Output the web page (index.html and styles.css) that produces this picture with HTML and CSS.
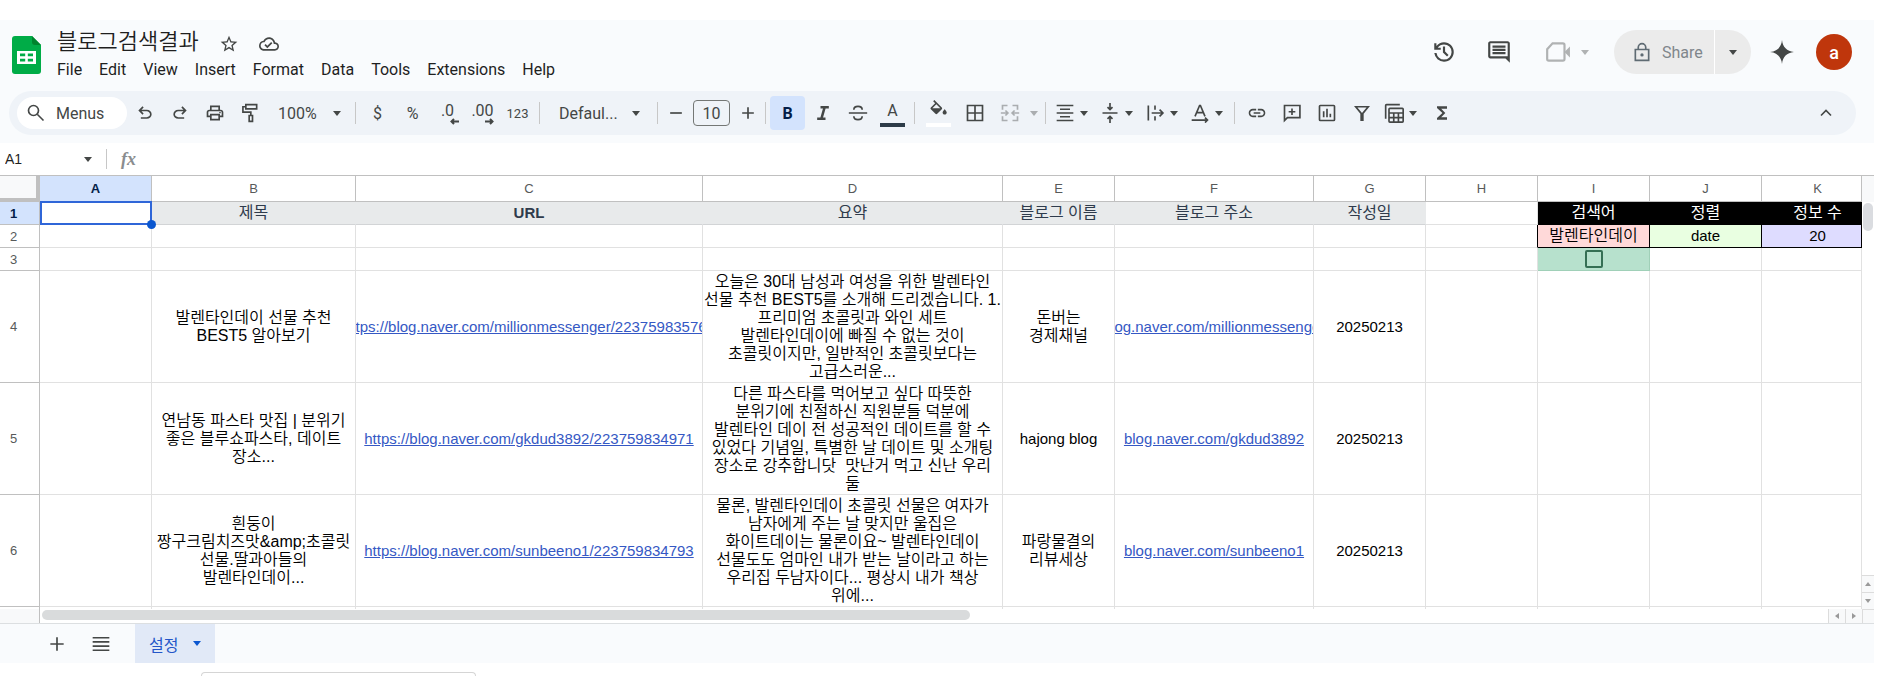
FILE: index.html
```
<!DOCTYPE html>
<html lang="ko">
<head>
  <meta charset="UTF-8" />
  <meta name="viewport" content="width=device-width, initial-scale=1.0"/>
  <title>블로그검색결과</title>
  <link rel="stylesheet" href="styles.css">
</head>
<body>
  <!-- Title bar -->
  <header class="header">
    <svg class="logo" viewBox="0 0 29 38">
      <path fill="#00ac47" d="M3 0h17l9 9v26a3 3 0 0 1-3 3H3a3 3 0 0 1-3-3V3a3 3 0 0 1 3-3z"/>
      <path fill="#00832d" d="M20 0l9 9h-6a3 3 0 0 1-3-3z"/>
      <path fill="#fff" fill-rule="evenodd" d="M5 15h19v13H5zM8 17.500h5.200v2.800H8zM15.800 17.500H21v2.800h-5.200zM8 22.700h5.200v2.800H8zM15.800 22.700H21v2.800h-5.200z"/>
    </svg>
    <div class="doc">
      <div class="doc-title">
        <h1>블로그검색결과</h1>
        <button class="plain" aria-label="Star">
          <svg class="icon" viewBox="0 0 24 24"><path d="M22 9.240l-7.190-.62L12 2 9.190 8.630 2 9.240l5.460 4.730L5.820 21 12 17.270 18.180 21l-1.630-7.030L22 9.240zM12 15.400l-3.760 2.270 1-4.280-3.320-2.880 4.380-.38L12 6.100l1.710 4.040 4.380.38-3.320 2.880 1 4.280L12 15.400z"/></svg>
        </button>
        <button class="plain" aria-label="Saved to Drive">
          <svg class="icon" viewBox="0 0 24 24"><path d="M19.350 10.040C18.670 6.590 15.640 4 12 4 9.110 4 6.610 5.640 5.360 8.040 2.350 8.360 0 10.900 0 14c0 3.310 2.690 6 6 6h13c2.760 0 5-2.240 5-5 0-2.640-2.050-4.780-4.650-4.960zM19 18H6c-2.210 0-4-1.790-4-4 0-2.050 1.530-3.760 3.560-3.970l1.070-.11.5-.95C8.080 7.140 9.940 6 12 6c2.620 0 4.880 1.860 5.390 4.430l.3 1.500 1.530.11c1.560.1 2.780 1.410 2.780 2.960 0 1.650-1.350 3-3 3zm-9-3.820l-2.090-2.090L6.500 13.500 10 17l6.010-6.010-1.410-1.410z"/></svg>
        </button>
      </div>
      <nav class="menu">
        <a href="#">File</a>
        <a href="#">Edit</a>
        <a href="#">View</a>
        <a href="#">Insert</a>
        <a href="#">Format</a>
        <a href="#">Data</a>
        <a href="#">Tools</a>
        <a href="#">Extensions</a>
        <a href="#">Help</a>
      </nav>
    </div>
    <div class="actions">
      <button class="plain" aria-label="Version history">
        <svg class="icon big" viewBox="0 0 24 24"><path d="M12 21q-3.450 0-6.012-2.288T3.050 13H5.100q.35 2.600 2.313 4.300T12 19q2.925 0 4.963-2.037T19 12t-2.037-4.962T12 5q-1.725 0-3.225.8T6.250 8H9v2H3V4h2v2.350q1.275-1.600 3.113-2.475T12 3q1.875 0 3.513.713t2.850 1.924 1.925 2.850T21 12t-.712 3.513-1.925 2.850-2.850 1.925T12 21m2.800-4.800L11 12.400V7h2v4.600l3.200 3.200z"/></svg>
      </button>
      <button class="plain" aria-label="Comments">
        <svg class="icon big" viewBox="0 0 24 24"><path d="M21.990 4c0-1.100-.89-2-1.990-2H4c-1.100 0-2 .9-2 2v12c0 1.100.9 2 2 2h14l4 4-.01-18zM20 4v12H4V4h16zM6 12h12v2H6zm0-3h12v2H6zm0-3h12v2H6z"/></svg>
      </button>
      <button class="plain meet" aria-label="Join a call">
        <svg class="icon big" viewBox="0 0 24 24"><path class="line" d="M7 4h9.500a1.500 1.500 0 0 1 1.500 1.500v13a1.500 1.500 0 0 1-1.500 1.500H3.500A1.500 1.500 0 0 1 2 18.500V9.500z"/><path d="M18 12l5-5v10z"/></svg>
        <span class="caret"></span>
      </button>
      <div class="share">
        <button class="share-main">
          <svg class="icon" viewBox="0 0 24 24"><path class="line" d="M4 9h16v13H4zM7.500 9V6.500a4.500 4.500 0 0 1 9 0V9"/><circle cx="12" cy="15.500" r="2"/></svg>
          Share
        </button>
        <button class="share-more" aria-label="Share options"><span class="caret"></span></button>
      </div>
      <button class="plain" aria-label="Ask Gemini">
        <svg class="icon big" viewBox="0 0 24 24"><path d="M12 1c.6 6.500 4.500 10.400 11 11-6.500.6-10.400 4.500-11 11-.6-6.500-4.500-10.400-11-11 6.500-.6 10.400-4.500 11-11z"/></svg>
      </button>
      <button class="avatar">a</button>
    </div>
  </header>

  <!-- Toolbar -->
  <div class="toolbar">
    <button class="search">
      <svg class="icon" viewBox="0 0 24 24"><circle class="line" cx="9" cy="9" r="6"/><path class="line" d="M13.500 13.500l7.500 7.500"/></svg>
      Menus
    </button>
    <button class="tool" aria-label="Undo"><svg class="icon" viewBox="0 0 24 24"><path d="M7 19v-2h7.100q1.575 0 2.738-1T18 13.500t-1.162-2.500T14.100 10H7.800l2.600 2.600L9 14 4 9l5-5 1.400 1.400L7.800 8h6.300q2.425 0 4.163 1.575T20 13.500t-1.737 3.925T14.100 19z"/></svg></button>
    <button class="tool" aria-label="Redo"><svg class="icon" viewBox="0 0 24 24"><path transform="matrix(-1 0 0 1 24 0)" d="M7 19v-2h7.100q1.575 0 2.738-1T18 13.500t-1.162-2.500T14.100 10H7.800l2.600 2.600L9 14 4 9l5-5 1.400 1.400L7.800 8h6.300q2.425 0 4.163 1.575T20 13.500t-1.737 3.925T14.100 19z"/></svg></button>
    <button class="tool" aria-label="Print"><svg class="icon" viewBox="0 0 24 24"><path d="M19 8h-1V3H6v5H5c-1.660 0-3 1.340-3 3v6h4v4h12v-4h4v-6c0-1.660-1.340-3-3-3zM8 5h8v3H8V5zm8 12v2H8v-4h8v2zm2-2v-2H6v2H4v-4c0-.55.45-1 1-1h14c.55 0 1 .45 1 1v4h-2z"/><circle cx="18" cy="11.500" r="1"/></svg></button>
    <button class="tool" aria-label="Paint format"><svg class="icon" viewBox="0 0 24 24"><path class="line" d="M7 2h13v5H7zM7 4.500H3.500V11H13v4M11 15h4v7h-4z"/></svg></button>
    <div class="pick zoom">
      <select aria-label="Zoom"><option>100%</option></select>
      <span class="caret"></span>
    </div>
    <span class="sep"></span>
    <button class="tool">$</button>
    <button class="tool">%</button>
    <button class="tool decimal" aria-label="Decrease decimal places">.0<svg viewBox="0 0 9 7"><path d="M9 3.500H1.500M4 1L1.500 3.500 4 6"/></svg></button>
    <button class="tool decimal" aria-label="Increase decimal places">.00<svg viewBox="0 0 9 7"><path d="M0 3.500h7.500M5 1l2.500 2.500L5 6"/></svg></button>
    <button class="tool small">123</button>
    <span class="sep"></span>
    <div class="pick font">
      <select aria-label="Font"><option>Defaul...</option></select>
      <span class="caret"></span>
    </div>
    <span class="sep"></span>
    <button class="tool step" aria-label="Decrease font size"><svg class="icon" viewBox="0 0 24 24"><path class="line" d="M5 12h14"/></svg></button>
    <input class="size" type="text" value="10" aria-label="Font size">
    <button class="tool step" aria-label="Increase font size"><svg class="icon" viewBox="0 0 24 24"><path class="line" d="M5 12h14M12 5v14"/></svg></button>
    <span class="sep"></span>
    <button class="tool bold">B</button>
    <button class="tool" aria-label="Italic"><svg class="icon" viewBox="0 0 24 24"><path class="line thick" d="M9 5h10M5 19h10M14 5l-4 14"/></svg></button>
    <button class="tool" aria-label="Strikethrough"><svg class="icon" viewBox="0 0 24 24"><path class="line" d="M1 12h22M17 8c0-2.500-2-4-5-4S7 5.500 7 8M7 16c0 2.500 2 4 5 4s5-1.500 5-4"/></svg></button>
    <button class="tool color" aria-label="Text color">A</button>
    <span class="sep"></span>
    <button class="tool fill" aria-label="Fill color"><svg class="icon" viewBox="0 0 24 24"><path d="M16.560 8.940L7.620 0 6.210 1.410l2.380 2.380-5.150 5.150c-.59.59-.59 1.540 0 2.120l5.500 5.500c.29.29.68.44 1.060.44s.77-.15 1.060-.44l5.500-5.500c.59-.58.59-1.530 0-2.120zM5.210 10L10 5.210 14.790 10H5.210zM20 11s-2.500 2.500-2.500 4c0 1.400 1.100 2.500 2.500 2.500s2.500-1.100 2.500-2.500c0-1.500-2.500-4-2.500-4z"/></svg></button>
    <button class="tool" aria-label="Borders"><svg class="icon" viewBox="0 0 24 24"><path class="line" d="M3 3h18v18H3zM12 3v18M3 12h18"/></svg></button>
    <button class="tool drop merge" aria-label="Merge cells"><svg class="icon" viewBox="0 0 24 24"><path class="line" d="M9 3H3v5M9 21H3v-5M15 3h6v5M15 21h6v-5M1 12h8M6.500 9l3 3-3 3M23 12h-8M17.500 9l-3 3 3 3"/></svg><span class="caret"></span></button>
    <span class="sep"></span>
    <button class="tool drop" aria-label="Horizontal align"><svg class="icon" viewBox="0 0 24 24"><path class="line" d="M2 3h20M6 7.500h12M2 12h20M6 16.500h12M2 21h20"/></svg><span class="caret"></span></button>
    <button class="tool drop" aria-label="Vertical align"><svg class="icon" viewBox="0 0 24 24"><path class="line" d="M3 12h18M12 0v7M9 5l3 3 3-3M12 24v-7M9 19l3-3 3 3"/></svg><span class="caret"></span></button>
    <button class="tool drop" aria-label="Text wrapping"><svg class="icon" viewBox="0 0 24 24"><path class="line" d="M4 3v18M12 3v5M12 16v5M8 12h13M17.500 8l4 4-4 4"/></svg><span class="caret"></span></button>
    <button class="tool drop" aria-label="Text rotation"><svg class="icon" viewBox="0 0 24 24"><path class="line" d="M6 16l5.500-13h1L18 16M8 11.500h8M2 20.500h18M18 17.500l3 3-3 3"/></svg><span class="caret"></span></button>
    <span class="sep"></span>
    <button class="tool" aria-label="Insert link"><svg class="icon" viewBox="0 0 24 24"><path d="M3.900 12c0-1.710 1.390-3.100 3.100-3.100h4V7H7c-2.760 0-5 2.240-5 5s2.240 5 5 5h4v-1.900H7c-1.710 0-3.100-1.390-3.100-3.100zM8 13h8v-2H8v2zm9-6h-4v1.900h4c1.710 0 3.100 1.390 3.100 3.100s-1.390 3.100-3.100 3.100h-4V17h4c2.760 0 5-2.240 5-5s-2.240-5-5-5z"/></svg></button>
    <button class="tool" aria-label="Insert comment"><svg class="icon" viewBox="0 0 24 24"><path class="line" d="M3 21V3h18.500v14.500H6.500zM12 6.500v8M8 10.500h8"/></svg></button>
    <button class="tool" aria-label="Insert chart"><svg class="icon" viewBox="0 0 24 24"><path class="line" d="M4 3h16a1 1 0 0 1 1 1v16a1 1 0 0 1-1 1H4a1 1 0 0 1-1-1V4a1 1 0 0 1 1-1zM8 10v7M12 7v10M16 13v4"/></svg></button>
    <button class="tool" aria-label="Create a filter"><svg class="icon" viewBox="0 0 24 24"><path class="line" d="M4.500 4.500h15L13 12.500v8h-2v-8z"/></svg></button>
    <button class="tool drop" aria-label="Table views"><svg class="icon" viewBox="0 0 24 24"><path class="line" d="M2 19V3q0-1 1-1h16M7 6.500h15a1 1 0 0 1 1 1V22a1 1 0 0 1-1 1H7a1 1 0 0 1-1-1V7.500a1 1 0 0 1 1-1zM6 12h17M6 17.500h17M11.700 12v11M17.300 12v11"/></svg><span class="caret"></span></button>
    <button class="tool" aria-label="Functions"><svg class="icon" viewBox="0 0 24 24"><path d="M18 4H6v2l6.500 6L6 18v2h12v-3h-7l5-5-5-5h7z"/></svg></button>
    <button class="tool collapse" aria-label="Hide the menus"><svg class="icon" viewBox="0 0 24 24"><path class="line" d="M6 15l6-6 6 6"/></svg></button>
  </div>

  <!-- Formula bar -->
  <div class="formula">
    <input class="name-box" type="text" value="A1" aria-label="Name box">
    <span class="caret"></span>
    <span class="bar"></span>
    <label for="fx">fx</label>
    <input class="fx-input" id="fx" type="text">
  </div>

  <!-- Sheet -->
  <div class="grid">
    <table class="sheet">
      <colgroup>
        <col class="w-head"><col class="w-std"><col class="w-title"><col class="w-url"><col class="w-summary"><col class="w-std">
        <col class="w-blog"><col class="w-std"><col class="w-std"><col class="w-std"><col class="w-std"><col>
      </colgroup>
      <thead>
        <tr>
          <th class="corner"></th>
          <th class="on">A</th><th>B</th><th>C</th><th>D</th><th>E</th><th>F</th><th>G</th><th>H</th><th>I</th><th>J</th><th>K</th>
        </tr>
      </thead>
      <tbody>
        <tr>
          <th class="on">1</th>
          <td class="selected"></td>
          <td class="label">제목</td>
          <td class="label latin">URL</td>
          <td class="label">요약</td>
          <td class="label">블로그 이름</td>
          <td class="label">블로그 주소</td>
          <td class="label">작성일</td>
          <td></td>
          <td class="black">검색어</td>
          <td class="black">정렬</td>
          <td class="black">정보 수</td>
        </tr>
        <tr>
          <th>2</th>
          <td></td><td></td><td></td><td></td><td></td><td></td><td></td><td class="edge"></td>
          <td class="boxed pink">발렌타인데이</td>
          <td class="boxed green latin">date</td>
          <td class="boxed violet latin">20</td>
        </tr>
        <tr>
          <th>3</th>
          <td></td><td></td><td></td><td></td><td></td><td></td><td></td><td></td>
          <td class="mint"><input type="checkbox" aria-label="실행"></td>
          <td></td><td></td>
        </tr>
        <tr class="tall">
          <th>4</th>
          <td></td>
          <td>발렌타인데이 선물 추천<br>BEST5 알아보기</td>
          <td class="latin"><div class="clip"><a href="#">https://blog.naver.com/millionmessenger/223759835760</a></div></td>
          <td>오늘은 30대 남성과 여성을 위한 발렌타인<br>선물 추천 BEST5를 소개해 드리겠습니다. 1.<br>프리미엄 초콜릿과 와인 세트<br>발렌타인데이에 빠질 수 없는 것이<br>초콜릿이지만, 일반적인 초콜릿보다는<br>고급스러운...</td>
          <td>돈버는<br>경제채널</td>
          <td class="latin"><div class="clip"><a href="#">blog.naver.com/millionmessenger</a></div></td>
          <td class="latin">20250213</td>
          <td></td><td></td><td></td><td></td>
        </tr>
        <tr class="tall">
          <th>5</th>
          <td></td>
          <td>연남동 파스타 맛집 | 분위기<br>좋은 블루쇼파스타, 데이트<br>장소...</td>
          <td class="latin"><a href="#">https://blog.naver.com/gkdud3892/223759834971</a></td>
          <td>다른 파스타를 먹어보고 싶다 따뜻한<br>분위기에 친절하신 직원분들 덕분에<br>발렌타인 데이 전 성공적인 데이트를 할 수<br>있었다 기념일, 특별한 날 데이트 및 소개팅<br>장소로 강추합니닷&nbsp; 맛난거 먹고 신난 우리<br>둘</td>
          <td class="latin">hajong blog</td>
          <td class="latin"><a href="#">blog.naver.com/gkdud3892</a></td>
          <td class="latin">20250213</td>
          <td></td><td></td><td></td><td></td>
        </tr>
        <tr class="tall">
          <th>6</th>
          <td></td>
          <td>흰둥이<br>짱구크림치즈맛&amp;amp;초콜릿<br>선물.딸과아들의<br>발렌타인데이...</td>
          <td class="latin"><a href="#">https://blog.naver.com/sunbeeno1/223759834793</a></td>
          <td>물론, 발렌타인데이 초콜릿 선물은 여자가<br>남자에게 주는 날 맞지만 울집은<br>화이트데이는 물론이요~ 발렌타인데이<br>선물도도 엄마인 내가 받는 날이라고 하는<br>우리집 두남자이다... 평상시 내가 책상<br>위에...</td>
          <td>파랑물결의<br>리뷰세상</td>
          <td class="latin"><a href="#">blog.naver.com/sunbeeno1</a></td>
          <td class="latin">20250213</td>
          <td></td><td></td><td></td><td></td>
        </tr>
        <tr class="stub">
          <th></th>
          <td></td><td></td><td></td><td></td><td></td><td></td><td></td><td></td><td></td><td></td><td></td>
        </tr>
      </tbody>
    </table>
    <div class="scroll-y">
      <div class="thumb"></div>
      <button aria-label="Scroll up"><span class="tri up"></span></button>
      <button aria-label="Scroll down"><span class="tri down"></span></button>
    </div>
    <div class="scroll-x">
      <div class="under-rows"></div>
      <div class="track"><div class="thumb"></div></div>
      <button aria-label="Scroll left"><span class="tri left"></span></button>
      <button aria-label="Scroll right"><span class="tri right"></span></button>
    </div>
    <div class="scroll-corner"></div>
  </div>

  <!-- Sheet tabs -->
  <footer class="tabs">
    <button class="plain" aria-label="Add sheet"><svg class="icon" viewBox="0 0 24 24"><path class="line" d="M4 12h16M12 4v16"/></svg></button>
    <button class="plain" aria-label="All sheets"><svg class="icon" viewBox="0 0 24 24"><path class="line" d="M2 4.500h20M2 9.500h20M2 14.500h20M2 19.500h20"/></svg></button>
    <button class="tab">설정 <span class="caret"></span></button>
  </footer>
  <div class="panel"></div>
</body>
</html>
```

FILE: styles.css
```
* {
  margin: 0;
  padding: 0;
  box-sizing: border-box;
}
body {
  display: flex;
  flex-direction: column;
  height: 100vh;
  padding: 20px 5px 0 0;
  background: #fff;
  color: #1f1f1f;
  font-family: Roboto, "Noto Sans CJK KR", sans-serif;
  font-size: 16px;
  overflow: hidden;
}
button, input, select {
  border: 0;
  background: none;
  color: inherit;
  font: inherit;
}
a {
  color: inherit;
  text-decoration: none;
}
.icon {
  display: block;
  width: 20px;
  height: 20px;
  fill: #444746;
  flex: none;
}
.icon.big {
  width: 26px;
  height: 26px;
}
.icon .line {
  fill: none;
  stroke: #444746;
  stroke-width: 2;
}
.icon .thick {
  stroke-width: 3;
}
.caret {
  border: 4px solid transparent;
  border-top: 5px solid #444746;
  border-bottom: 0;
  flex: none;
}
.plain {
  display: flex;
  align-items: center;
}

/* Title bar */
.header {
  display: flex;
  height: 71px;
  padding: 0 22px 0 12px;
  background: #f9fbfd;
}
.logo {
  width: 29px;
  height: 38px;
  margin: 16px 16px 0 0;
}
.doc {
  display: flex;
  flex-direction: column;
  padding-top: 8px;
}
.doc-title {
  display: flex;
  align-items: center;
  gap: 20px;
  height: 31px;
}
.doc-title h1 {
  font-size: 22px;
  font-weight: 350;
  line-height: 24px;
  padding-bottom: 4px;
}
.menu {
  display: flex;
  gap: 17px;
  line-height: 22px;
}
.actions {
  display: flex;
  align-items: center;
  height: 64px;
  margin-left: auto;
  gap: 29px;
}
.meet {
  gap: 10px;
  opacity: 0.4;
  padding-left: 4px;
}
.share {
  display: flex;
  height: 44px;
  margin-right: -11px;
  margin-left: -4px;
  border-radius: 22px;
  background: #ebebeb;
  color: #80868b;
  overflow: hidden;
}
.share button {
  display: flex;
  align-items: center;
}
.share-main {
  gap: 10px;
  width: 101px;
  padding-left: 18px;
  border-right: 1px solid #fff;
}
.share-main .icon {
  fill: #5f6b73;
}
.share-main .line {
  stroke: #5f6b73;
}
.share-more {
  width: 36px;
  padding-left: 14px;
}
.avatar {
  width: 36px;
  height: 36px;
  margin-left: -8px;
  border-radius: 50%;
  background: #bf360c;
  color: #fff;
  font-size: 18px;
  font-weight: 500;
}

/* Toolbar */
.toolbar {
  display: flex;
  align-items: center;
  flex: none;
  height: 44px;
  padding: 0 13px 0 8px;
  margin: 0 18px 0 9px;
  border-radius: 22px;
  background: #eff3f8;
  box-shadow: 0 0 0 30px #f9fbfd;
  clip-path: inset(0 -18px -8px -9px);
  color: #444746;
}
.search {
  display: flex;
  align-items: center;
  gap: 10px;
  width: 110px;
  height: 32px;
  padding-left: 9px;
  border-radius: 16px;
  background: #fff;
}
.tool {
  display: flex;
  align-items: center;
  justify-content: center;
  flex: none;
  width: 35px;
  height: 34px;
}
.sep {
  flex: none;
  width: 1px;
  height: 22px;
  margin: 0 4px;
  background: #c7c7c7;
}
.pick {
  display: flex;
  align-items: center;
  flex: none;
}
.pick select {
  appearance: none;
}
.zoom {
  width: 84px;
  padding-left: 11px;
}
.zoom select {
  width: 55px;
}
.font {
  width: 109px;
  padding-left: 15px;
}
.font select {
  width: 73px;
}
.decimal {
  position: relative;
  padding-bottom: 6px;
}
.decimal svg {
  position: absolute;
  right: 6px;
  bottom: 5px;
  width: 9px;
  height: 7px;
  fill: none;
  stroke: #444746;
  stroke-width: 2;
}
.small {
  font-size: 13px;
}
.step {
  width: 27px;
}
.size {
  width: 37px;
  height: 26px;
  margin: 0 4px;
  border: 1px solid #747775;
  border-radius: 4px;
  text-align: center;
}
.bold {
  border-radius: 4px;
  background: #d3e3fd;
  color: #041e49;
  font-weight: 700;
}
.color {
  background: linear-gradient(#2d3b48, #2d3b48) center 27px / 25px 4px no-repeat;
  padding-bottom: 6px;
}
.fill {
  width: 38px;
  background: linear-gradient(#fff, #fff) center 27px / 25px 4px no-repeat;
  padding-bottom: 6px;
}
.drop {
  justify-content: flex-start;
  gap: 5px;
  width: 45px;
  padding-left: 5px;
}
.merge {
  gap: 10px;
  width: 49px;
  padding-left: 8px;
  opacity: 0.4;
}
.collapse {
  margin-left: auto;
}

/* Formula bar */
.formula {
  display: flex;
  align-items: center;
  flex: none;
  height: 32px;
  margin-top: 8px;
  padding-left: 5px;
  font-family: "Liberation Sans", sans-serif;
  font-size: 14px;
}
.name-box {
  width: 79px;
}
.bar {
  width: 1px;
  height: 20px;
  margin: 0 14px 0 14px;
  background: #c7c7c7;
}
.formula label {
  color: #8a8d8f;
  font: italic 700 18px "Liberation Serif", serif;
}
.fx-input {
  flex: 1;
}

/* Sheet */
.grid {
  display: grid;
  grid-template-columns: 1fr 12px;
  flex: none;
  border-top: 1px solid #c0c0c0;
}
.sheet {
  width: 100%;
  table-layout: fixed;
  border-spacing: 0;
}
.w-head { width: 40px; }
.w-std { width: 112px; }
.w-title { width: 204px; }
.w-url { width: 347px; }
.w-summary { width: 300px; }
.w-blog { width: 199px; }
.sheet th {
  height: 23px;
  border-right: 1px solid #c0c0c0;
  border-bottom: 1px solid #c0c0c0;
  color: #575a5a;
  font: 13px "Liberation Sans", sans-serif;
}
.sheet thead th {
  height: 26px;
}
.sheet tbody th {
  padding-right: 12px;
}
.sheet .on {
  background: #d3e3fd;
  color: #041e49;
  font-weight: 700;
}
.sheet .corner {
  border-right: 4px solid #c0c0c0;
  border-bottom: 4px solid #c0c0c0;
  background: #f8f9fa;
}
.sheet td {
  height: 23px;
  border-right: 1px solid #e1e1e1;
  border-bottom: 1px solid #e1e1e1;
  color: #000;
  font: 350 16px/18px "Liberation Sans", "Noto Sans CJK KR", sans-serif;
  text-align: center;
  vertical-align: middle;
  white-space: nowrap;
}
.sheet .latin {
  font-size: 15px;
}
.sheet .tall td {
  height: 112px;
}
.sheet .stub th,
.sheet .stub td {
  height: 2px;
  border-bottom: 0;
}
/* column K runs on under the scrollbar */
.sheet tr > :last-child {
  padding-left: 12px;
}
.sheet a {
  color: #3558c4;
  text-decoration: underline;
}
.clip {
  display: flex;
  justify-content: center;
  overflow: hidden;
}
.sheet .label {
  border-color: #d2d4d6;
  border-right-color: #e8eaeb;
  background: #e8eaeb;
  color: #2f3b4c;
  font-weight: 400;
}
.sheet .label.latin {
  font-weight: 700;
}
.sheet .black {
  border-color: #000;
  background: #000;
  color: #fff;
  font-weight: 400;
}
.sheet .edge {
  border-right-color: #000;
}
.sheet .boxed {
  border-color: #000;
}
.sheet .pink { background: #ffd9d9; }
.sheet .green { background: #e9ffe1; }
.sheet .violet { background: #dedcff; }
.sheet .mint {
  border-color: #a0d0b8;
  background: #b7e1cd;
}
.mint input {
  display: block;
  appearance: none;
  width: 18px;
  height: 18px;
  margin: 0 auto;
  border: 2px solid #356f54;
  border-radius: 2px;
}
.sheet .selected {
  position: relative;
}
.selected::before {
  content: "";
  position: absolute;
  inset: -1px -1px -1px 0;
  border: 2px solid #2f66d8;
}
.selected::after {
  content: "";
  position: absolute;
  right: -5px;
  bottom: -5px;
  width: 9px;
  height: 9px;
  border-radius: 50%;
  background: #0b57d0;
  z-index: 1;
}

/* Scrollbars */
.scroll-y {
  display: flex;
  flex-direction: column;
  border-top: 26px solid #f8f9fa;
}
.scroll-y .thumb {
  width: 10px;
  height: 28px;
  margin: 1px 1px auto;
  border-radius: 5px;
  background: #dadce0;
}
.scroll-y button,
.scroll-x button {
  display: flex;
  align-items: center;
  justify-content: center;
  flex: none;
  background: #f8f9fa;
}
.scroll-y button {
  height: 17px;
  border-top: 1px solid #dcdcdc;
}
.scroll-x {
  display: flex;
  height: 14px;
}
.scroll-x button {
  width: 17px;
  border-left: 1px solid #dcdcdc;
}
.under-rows {
  width: 40px;
  border-right: 1px solid #c0c0c0;
  background: #f8f9fa;
}
.track {
  flex: 1;
  padding: 1px 2px;
}
.track .thumb {
  width: 52%;
  height: 10px;
  border-radius: 5px;
  background: #d9dbdc;
}
.scroll-corner {
  border-top: 1px solid #dcdcdc;
  border-left: 1px solid #dcdcdc;
  background: #f8f9fa;
}
.tri {
  border: 3px solid transparent;
}
.up { border-bottom: 4px solid #999; border-top: 0; }
.down { border-top: 4px solid #999; border-bottom: 0; }
.left { border-right: 4px solid #999; border-left: 0; }
.right { border-left: 4px solid #999; border-right: 0; }

/* Sheet tabs */
.tabs {
  display: flex;
  flex: none;
  height: 40px;
  padding-left: 47px;
  gap: 24px;
  border-top: 1px solid #dcdfe1;
  background: #f9fbfd;
}
.tab {
  display: flex;
  align-items: center;
  gap: 15px;
  padding: 0 14px;
  background: #e1e9f7;
  color: #2456c8;
}
.tab .caret {
  border-top-color: #0b57d0;
}
.panel {
  width: 275px;
  flex: 1;
  margin: 9px 0 0 201px;
  border: 1px solid #d5d5d5;
  border-bottom: 0;
  border-radius: 6px 6px 0 0;
}
```
